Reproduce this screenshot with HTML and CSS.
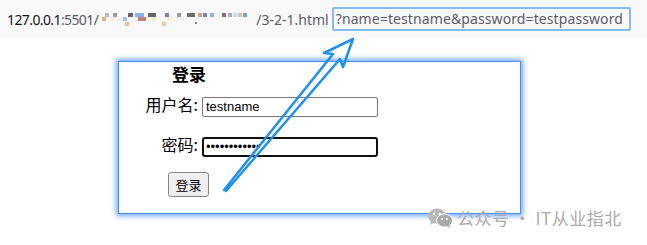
FILE: index.html
```html
<!DOCTYPE html>
<html lang="zh-CN">
<head>
    <meta charset="UTF-8">
    <title>3-2-1</title>
    <link rel="stylesheet" href="styles.css">
</head>
<body>
    <!-- Address bar -->
    <div class="urlbar">
        <span class="host">127.0.0.1</span><span class="path port">:5501/</span>
        <svg class="mosaic" width="152" height="16" viewBox="0 0 152 16">
            <rect x="7" y="1" width="4" height="4" fill="#bbb"/>
            <rect x="15" y="1" width="4" height="4" fill="#999"/>
            <rect x="30" y="1" width="5" height="4" fill="#666"/>
            <rect x="37" y="1" width="9" height="4" fill="#8ab4e8"/>
            <rect x="50" y="1" width="8" height="4" fill="#666"/>
            <rect x="67" y="1" width="4" height="4" fill="#8a7ab0"/>
            <rect x="79" y="1" width="4" height="4" fill="#999"/>
            <rect x="89" y="1" width="8" height="4" fill="#6a6a6a"/>
            <rect x="100" y="1" width="4" height="4" fill="#d9a07a"/>
            <rect x="105" y="1" width="4" height="4" fill="#8a7ab0"/>
            <rect x="112" y="1" width="4" height="4" fill="#8ab4e8"/>
            <rect x="124" y="1" width="4" height="4" fill="#8a6a90"/>
            <rect x="130" y="1" width="4" height="4" fill="#aaa"/>
            <rect x="135" y="1" width="4" height="4" fill="#bde0f5"/>
            <rect x="140" y="1" width="4" height="4" fill="#d5c7a0"/>
            <rect x="145" y="1" width="4" height="4" fill="#7a9fd0"/>
            <rect x="4" y="5" width="4" height="4" fill="#e0b080"/>
            <rect x="12" y="5" width="4" height="4" fill="#f5f0d0"/>
            <rect x="20" y="5" width="4" height="4" fill="#eee"/>
            <rect x="25" y="5" width="4" height="4" fill="#a0c0e8"/>
            <rect x="40" y="5" width="8" height="4" fill="#c08070"/>
            <rect x="54" y="5" width="4" height="4" fill="#f5eec5"/>
            <rect x="69" y="5" width="4" height="4" fill="#f5eec5"/>
            <rect x="82" y="5" width="4" height="4" fill="#eee"/>
            <rect x="97" y="5" width="4" height="4" fill="#eee"/>
            <rect x="27" y="10" width="4" height="4" fill="#f0c090"/>
            <rect x="64" y="10" width="4" height="4" fill="#f5c8a0"/>
            <rect x="97" y="10" width="2" height="2" fill="#888"/>
        </svg>
        <span class="path">/3-2-1.html</span><span class="query">?name=testname&amp;password=testpassword</span>
    </div>

    <!-- Login form -->
    <form class="login-box">
        <h2 class="login-title">登录</h2>
        <div class="row">
            <label class="row-label">用户名:</label>
            <input class="field" type="text" value="testname">
        </div>
        <div class="row">
            <label class="row-label">密码:</label>
            <input class="field field-active" type="password" value="testpassword">
        </div>
        <button class="submit" type="button">登录</button>
    </form>

    <!-- Annotation arrow -->
    <svg class="arrow" width="647" height="245" viewBox="0 0 647 245">
        <path d="M224 190 L333 54 L324 53 L353 39 L343 67 L340 59 L226 191" fill="none" stroke="#1e90f0" stroke-width="2.5" stroke-linejoin="round" stroke-linecap="round"/>
    </svg>

    <!-- Watermark -->
    <div class="watermark">
        <svg class="wechat" width="25" height="20" viewBox="0 0 25 20">
            <ellipse cx="9" cy="8" rx="9" ry="7.5" fill="#b9b9b9"/>
            <path d="M3 13 L2 17 L7 14 Z" fill="#b9b9b9"/>
            <ellipse cx="16.5" cy="12.5" rx="8" ry="6.5" fill="#a9a9a9" stroke="#fff" stroke-width="1"/>
            <path d="M21 17 L23 20 L18 18 Z" fill="#a9a9a9"/>
            <circle cx="6" cy="6" r="1.2" fill="#fff"/>
            <circle cx="12" cy="6" r="1.2" fill="#fff"/>
            <circle cx="14" cy="11" r="1" fill="#fff"/>
            <circle cx="19" cy="11" r="1" fill="#fff"/>
        </svg>
        <span>公众号 · IT从业指北</span>
    </div>
</body>
</html>
```

FILE: styles.css
```css
/* General Styles */
* {
    margin: 0;
    padding: 0;
    box-sizing: border-box;
}

body {
    width: 647px;
    height: 245px;
    background: #ffffff;
    font-family: "Noto Sans CJK SC", "Noto Sans", sans-serif;
    position: relative;
    overflow: hidden;
}

/* Address bar */
.urlbar {
    height: 38px;
    background: #f9f9fb;
    display: flex;
    align-items: center;
    padding-left: 7px;
    font-family: "Noto Sans", sans-serif;
    font-size: 14px;
    color: #5b5b66;
    white-space: nowrap;
}

.host {
    color: #15141a;
    letter-spacing: -0.6px;
}

.port {
    letter-spacing: -0.6px;
}

.mosaic {
    display: block;
    margin: 2px 6px 0 0;
}

.query {
    margin-left: 3px;
    padding: 1px 6px 1px 2px;
    border: 2px solid #86bbf2;
    border-radius: 2px;
    line-height: 18px;
    letter-spacing: 0.1px;
}

/* Login box */
.login-box {
    width: 403px;
    height: 153px;
    margin: 23px 0 0 118px;
    border: 1px solid #4a8ff7;
    box-shadow: 0 0 5px 2px rgba(70, 140, 255, 0.75);
    background: #ffffff;
}

.login-title {
    margin-left: 53px;
    font-size: 17px;
    font-weight: bold;
    line-height: 24px;
    color: #000;
}

.row {
    display: flex;
    align-items: center;
    margin-top: 8px;
}

.row + .row {
    margin-top: 15px;
}

.row-label {
    width: 83px;
    padding-right: 4px;
    padding-bottom: 5px;
    text-align: right;
    font-size: 16px;
    line-height: 20px;
    color: #000;
}

.field {
    width: 176px;
    height: 20px;
    border: 1px solid #767676;
    border-radius: 2px;
    padding: 0 3px;
    font-family: "Liberation Sans", Arial, sans-serif;
    font-size: 13px;
    color: #000;
    outline: none;
}

.field-active {
    border: 2px solid #101010;
    border-radius: 3px;
    padding: 0 2px;
}

.submit {
    margin: 13px 0 0 49px;
    width: 41px;
    height: 25px;
    background: #efefef;
    border: 1px solid #858585;
    border-radius: 3px;
    font-family: "Noto Sans CJK SC", sans-serif;
    font-size: 13px;
    color: #000;
}

/* Overlays */
.arrow {
    position: absolute;
    top: 0;
    left: 0;
    pointer-events: none;
}

.watermark {
    position: absolute;
    left: 428px;
    top: 205px;
    display: flex;
    align-items: center;
    gap: 4px;
    font-size: 17px;
    color: #ababab;
    letter-spacing: 0.5px;
}

.wechat {
    display: block;
}
```
